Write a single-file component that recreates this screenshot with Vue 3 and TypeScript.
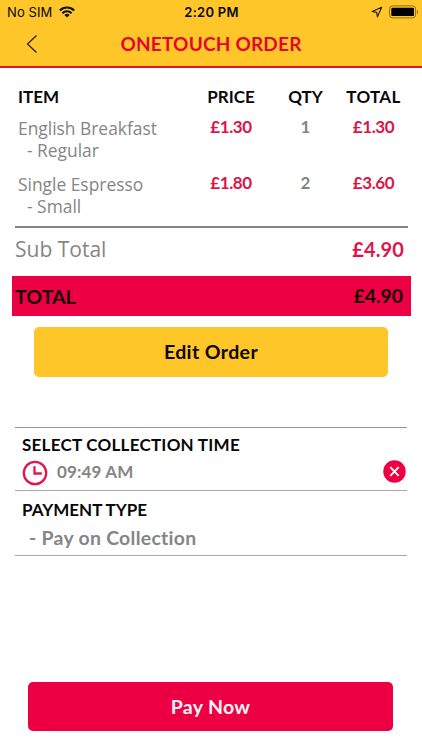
<script setup lang="ts">
interface OrderLine {
  name: string
  size: string
  price: string
  qty: number
  total: string
}

const lines: OrderLine[] = [
  { name: 'English Breakfast', size: 'Regular', price: '£1.30', qty: 1, total: '£1.30' },
  { name: 'Single Espresso', size: 'Small', price: '£1.80', qty: 2, total: '£3.60' },
]
const orderTotal = '£4.90'
</script>

<template>
  <div class="screen">
    <header class="header">
      <div class="status">
        <div class="carrier">
          <span class="sim">No SIM</span>
          <svg class="wifi" width="16" height="12" viewBox="0 0 16 12">
            <g fill="none" stroke="#111" stroke-width="2.1">
              <path d="M.8 4.5a10.2 10.2 0 0 1 14.4 0" />
              <path d="M3.4 7.2a6.5 6.5 0 0 1 9.2 0" />
            </g>
            <path d="M8 11.6 5.4 9a3.7 3.7 0 0 1 5.2 0z" fill="#111" />
          </svg>
        </div>
        <span class="clock">2:20 PM</span>
        <div class="power">
          <svg width="12" height="12" viewBox="0 0 12 12">
            <path d="M10.7 1.2 1.2 5.5l4.5.9.7 4.4z" fill="none" stroke="#1c180a" stroke-width="1.1" stroke-linejoin="round" />
          </svg>
          <svg width="30" height="14" viewBox="0 0 30 14">
            <rect x=".6" y=".9" width="26" height="12" rx="3" fill="none" stroke="#8f701b" stroke-width="1" />
            <rect x="2.3" y="2.7" width="22.7" height="8.4" rx="1.2" fill="#000" />
            <path d="M28 5a2.3 2.3 0 0 1 0 4z" fill="#8f701b" />
          </svg>
        </div>
      </div>
      <div class="titlebar">
        <svg class="back" width="12" height="20" viewBox="0 0 12 20">
          <path d="M10.5 1.5 1.5 10l9 8.5" fill="none" stroke="#2b2411" stroke-width="1.3" />
        </svg>
        <h1 class="title">ONETOUCH ORDER</h1>
      </div>
    </header>

    <section class="items">
      <div class="row heads">
        <span class="item-head">ITEM</span><span class="price-head">PRICE</span><span class="qty-head">QTY</span><span class="total-head">TOTAL</span>
      </div>
      <div v-for="line in lines" :key="line.name" class="row line">
        <div class="name">
          <div>{{ line.name }}</div>
          <div class="size">- {{ line.size }}</div>
        </div>
        <span class="money">{{ line.price }}</span>
        <span class="qty">{{ line.qty }}</span>
        <span class="money">{{ line.total }}</span>
      </div>
    </section>

    <div class="subtotal"><span class="sub-label">Sub Total</span><span class="sum">{{ orderTotal }}</span></div>
    <div class="total"><span class="total-label">TOTAL</span><span class="sum">{{ orderTotal }}</span></div>
    <button class="edit">Edit Order</button>

    <section class="options">
      <div class="option time">
        <h2 class="collect">SELECT COLLECTION TIME</h2>
        <div class="timerow">
          <svg class="dial" width="26" height="26" viewBox="0 0 26 26">
            <circle cx="13" cy="13" r="11.2" fill="none" stroke="#e0174b" stroke-width="2.3" />
            <path d="M12.5 6.3v7.2h7.3" fill="none" stroke="#e0174b" stroke-width="2.3" />
          </svg>
          <span class="slot">09:49 AM</span>
          <svg class="clear" width="23" height="23" viewBox="0 0 23 23">
            <circle cx="11.5" cy="11.5" r="11.2" fill="#ed0043" />
            <path d="m7.3 7.2 8.4 8.6m0-8.6-8.4 8.6" stroke="#fff" stroke-width="1.9" />
          </svg>
        </div>
      </div>
      <div class="option payment">
        <h2 class="paytype">PAYMENT TYPE</h2>
        <div class="method">- Pay on Collection</div>
      </div>
    </section>

    <button class="pay">Pay Now</button>
  </div>
</template>

<style>
body {
  margin: 0;
  background: #fff;
}
</style>

<style scoped>
.screen {
  box-sizing: border-box;
  width: 422px;
  height: 750px;
  overflow: hidden;
  display: flex;
  flex-direction: column;
  background: #fff;
  color: #080808;
  font-family: Lato, sans-serif;
  font-weight: 700;
  font-variant-ligatures: none;
  white-space: nowrap;
}
.header {
  box-sizing: border-box;
  height: 68px;
  background: #ffc629;
  border-bottom: 2px solid #dc1632;
}
.status {
  display: grid;
  grid-template-columns: 1fr auto 1fr;
  align-items: center;
  height: 24px;
  padding: 0 7px;
  font-family: Inter, sans-serif;
  font-size: 13px;
}
.carrier {
  display: flex;
  align-items: center;
  gap: 7px;
  font-weight: 400;
}
.sim {
  letter-spacing: 0.1px;
}
.clock {
  font-weight: 600;
  letter-spacing: 0.25px;
  margin-left: 1px;
}
.power {
  display: flex;
  align-items: center;
  justify-content: flex-end;
  gap: 6px;
  margin-right: -4px;
}
.wifi {
  margin-top: -1px;
}
.titlebar {
  display: grid;
  grid-template-columns: 94px 1fr 94px;
  align-items: center;
  height: 40px;
}
.back {
  margin-left: 26px;
}
.title {
  margin: 0;
  text-align: center;
  color: #e3062d;
  font-size: 19px;
  font-weight: 700;
  line-height: 24px;
  letter-spacing: 0.2px;
}
.items {
  box-sizing: border-box;
  height: 160px;
  margin: 0 14px 0 15px;
  padding: 18px 0 0 3px;
  border-bottom: 2px solid #858585;
}
.row {
  display: grid;
  grid-template-columns: 176px 74px 75px 61px;
  text-align: center;
}
.heads {
  height: 31px;
  font-size: 17px;
  line-height: 22px;
}
.item-head {
  text-align: left;
}
.total-head {
  letter-spacing: 0.3px;
}
.line {
  height: 56px;
  font-size: 17px;
  line-height: 20px;
}
.name {
  padding-top: 1px;
  text-align: left;
  color: #858585;
  font: 400 17.4px/21.5px "Open Sans", sans-serif;
}
.size {
  padding-left: 9px;
}
.money {
  color: #dc1648;
  letter-spacing: -0.4px;
}
.qty {
  color: #858585;
}
.subtotal,
.total {
  display: flex;
  align-items: center;
  justify-content: space-between;
}
.subtotal {
  height: 43px;
  margin: 0 18px 5px 15px;
}
.sub-label {
  margin-top: -2px;
  color: #858585;
  font: 400 21px/26px "Open Sans", sans-serif;
}
.sum {
  font-size: 20px;
}
.subtotal .sum {
  margin-top: -2px;
  color: #dc1648;
  letter-spacing: 0.1px;
}
.total {
  height: 40px;
  margin: 0 11px 0 12px;
  padding: 0 8px 0 3px;
  background: #ed0043;
  color: #160006;
  font-size: 19.6px;
}
.total .sum {
  margin-top: -2px;
  font-size: 19.4px;
}
button {
  border: 0;
  padding: 0;
  border-radius: 5px;
  font: 700 19.5px/24px Lato, sans-serif;
}
.edit {
  width: 354px;
  height: 50px;
  margin: 11px 0 0 34px;
  background: #ffc629;
  color: #0c0800;
  letter-spacing: 0.4px;
}
.options {
  margin: 50px 15px 0;
  border-top: 1px solid #969696;
}
.option {
  box-sizing: border-box;
  border-bottom: 1px solid #aaa;
  padding-left: 7px;
}
.time {
  height: 63px;
  padding-top: 7px;
}
.payment {
  height: 65px;
  padding-top: 9px;
}
h2 {
  margin: 0;
  font-size: 17px;
  font-weight: 700;
  line-height: 20px;
}
.collect {
  letter-spacing: 0.25px;
}
.timerow {
  display: flex;
  align-items: center;
  height: 34px;
  color: #858585;
  font-size: 17px;
}
.dial {
  margin-top: 2px;
}
.slot {
  margin: -2px 0 0 9px;
  letter-spacing: 0.15px;
}
.clear {
  margin: 0 1px 2px auto;
}
.method {
  padding: 6px 0 0 7px;
  color: #858585;
  font-size: 19.4px;
  line-height: 24px;
  letter-spacing: 0.3px;
}
.pay {
  width: 365px;
  height: 49px;
  margin: auto 0 19px 28px;
  background: #ed0043;
  color: #fff5f7;
  letter-spacing: 0.3px;
}
</style>
